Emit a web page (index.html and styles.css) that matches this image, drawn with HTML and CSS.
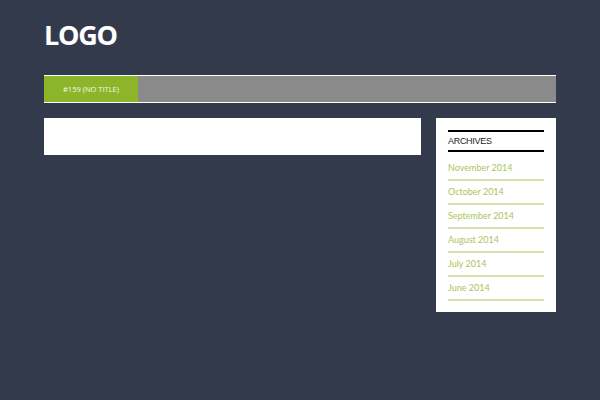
FILE: index.html
```html
<!DOCTYPE html>
<html>
<head>
<meta charset="utf-8">
<link rel="stylesheet" href="styles.css">
</head>
<body>
<div class="wrap">
  <header class="header">
    <div class="logo">LOGO</div>
  </header>
  <nav class="nav">
    <a class="tab">#159 (NO TITLE)</a>
  </nav>
  <div class="row">
    <main class="content"></main>
    <aside class="sidebar">
      <h3 class="widget-title">ARCHIVES</h3>
      <ul class="archives">
        <li><a>November 2014</a></li>
        <li><a>October 2014</a></li>
        <li><a>September 2014</a></li>
        <li><a>August 2014</a></li>
        <li><a>July 2014</a></li>
        <li><a>June 2014</a></li>
      </ul>
    </aside>
  </div>
</div>
</body>
</html>
```

FILE: styles.css
```css
html, body {
  margin: 0;
  padding: 0;
  background: #333a4b;
}
body {
  font-family: "Open Sans", "Liberation Sans", sans-serif;
}
.wrap {
  width: 512px;
  margin: 0 auto;
}
.header {
  height: 75px;
  box-sizing: border-box;
  padding-top: 17px;
}
.logo {
  color: #ffffff;
  font-weight: 700;
  font-size: 27px;
  line-height: 36px;
  letter-spacing: -1.3px;
}
.nav {
  display: flex;
  height: 26px;
  background: #8a8a8a;
  border-top: 1px solid #ffffff;
  border-bottom: 1px solid #ffffff;
}
.tab {
  width: 94px;
  background: #8db52a;
  color: #f4f8e8;
  font-family: "Open Sans", "Liberation Sans", sans-serif;
  font-size: 7.5px;
  line-height: 26px;
  text-align: center;
}
.row {
  display: flex;
  align-items: flex-start;
  gap: 15px;
  margin-top: 15px;
}
.content {
  width: 377px;
  height: 37px;
  background: #ffffff;
}
.sidebar {
  width: 120px;
  box-sizing: border-box;
  padding: 12px 12px 11px;
  background: #ffffff;
}
.widget-title {
  margin: 0;
  border-top: 2px solid #000000;
  border-bottom: 2px solid #000000;
  font-family: "Liberation Sans", Arial, sans-serif;
  font-weight: 400;
  font-size: 9px;
  line-height: 18px;
  color: #222222;
  letter-spacing: -0.3px;
}
.archives {
  list-style: none;
  margin: 5px 0 0;
  padding: 0;
}
.archives li {
  height: 22px;
  border-bottom: 2px solid #d8e2b0;
  font-family: "Lato", "Liberation Sans", sans-serif;
  font-size: 9px;
  line-height: 22px;
  color: #aac55c;
}
```
